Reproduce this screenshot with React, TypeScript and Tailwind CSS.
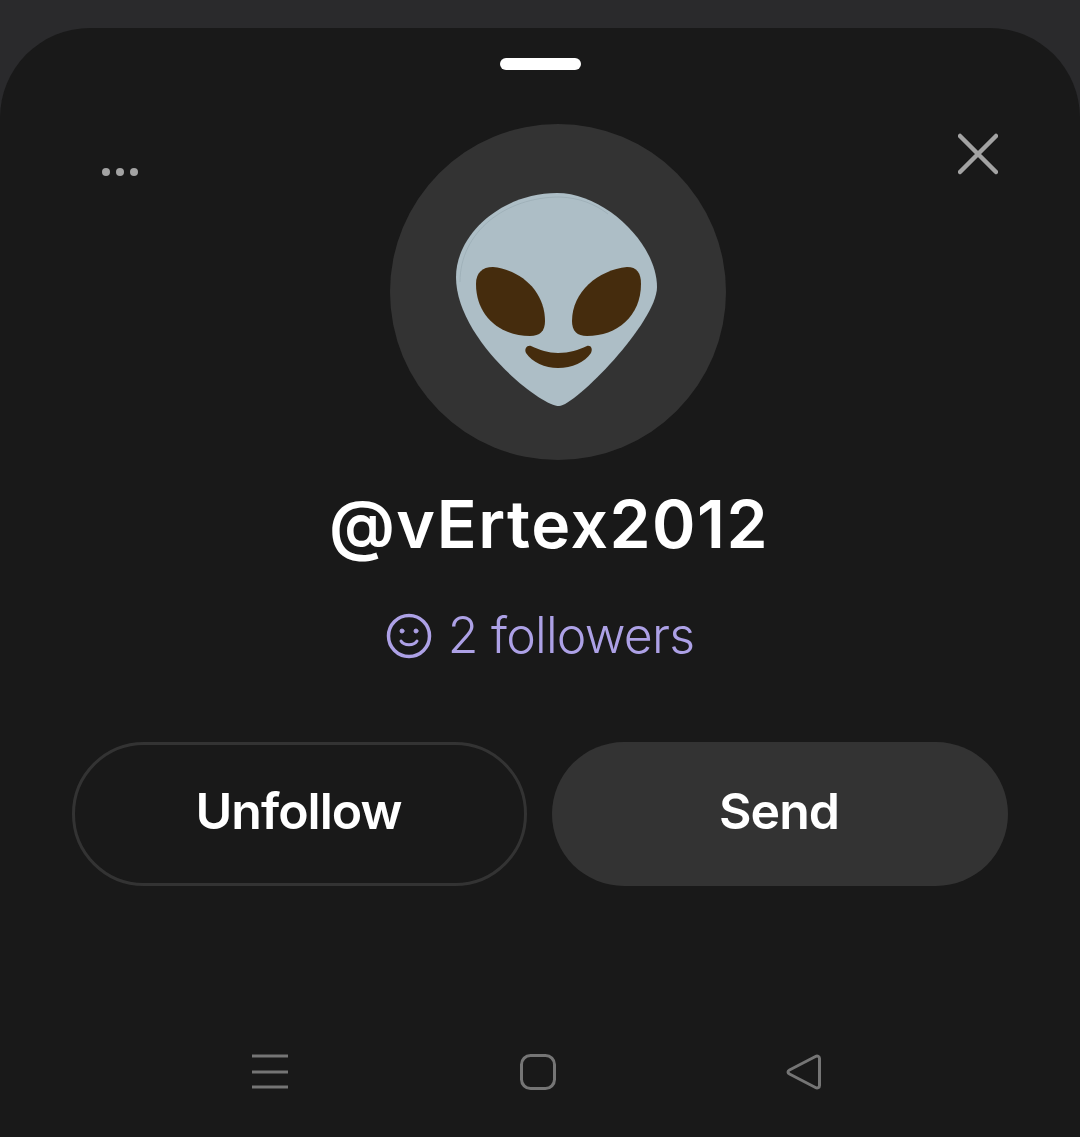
const FONT = "font-['Inter',sans-serif]";

function AlienEmoji() {
  return (
    <svg width="336" height="336" viewBox="0 0 336 336" aria-hidden>
      <path
        d="M167 69C215 69 267 120 267 163C267 198 185 282 169 282C150 282 66 215 66 153C66 110 112 69 167 69Z"
        fill="#adbec6"
      />
      <path d="M70 158C70 108 115 73 170 73C190 74 205 80 218 90" fill="none" stroke="#93a5ad" strokeWidth="0.5" />
      <path
        d="M103 143C132 146 155 168 155 197C155 207 150 212 140 212C110 212 86 192 86 160C86 149 92 143 103 143Z"
        fill="#452c0d"
      />
      <path
        d="M237 143C208 146 182 168 182 197C182 207 187 212 197 212C227 212 251 192 251 160C251 149 247 143 237 143Z"
        fill="#452c0d"
      />
      <path
        d="M141 222C150 226 158 229 168 229C180 229 188 226 197 222C201 221 203 225 201 229C195 238 182 244 168 244C155 244 142 238 136 229C134 225 137 221 141 222Z"
        fill="#452c0d"
      />
    </svg>
  );
}

function NavBar() {
  return (
    <div className="mt-[168px] flex h-[36px] items-center">
      <svg className="ml-[252px]" width="36" height="36" viewBox="0 0 36 36" fill="none" stroke="#757575" strokeWidth="3" aria-hidden>
        <path d="M0 2h36M0 18h36M0 33h36" />
      </svg>
      <svg className="ml-[232px]" width="36" height="36" viewBox="0 0 36 36" fill="none" stroke="#757575" strokeWidth="3" aria-hidden>
        <rect x="1.500" y="1.500" width="33" height="33" rx="9" />
      </svg>
      <svg className="ml-[230px]" width="36" height="36" viewBox="0 0 36 36" fill="none" stroke="#757575" strokeWidth="3" strokeLinejoin="round" aria-hidden>
        <path d="M29.500 2.500C31.500 1.500 33.500 2.500 33.500 4.500V31.500C33.500 33.500 31.500 34.500 29.500 33.500L3.500 20C1.500 19 1.500 17 3.500 16Z" />
      </svg>
    </div>
  );
}

export default function App() {
  return (
    <div className={`${FONT} h-[1137px] w-[1080px] overflow-hidden bg-[#2a2a2c] pt-[28px]`}>
      <div className="h-[1109px] rounded-t-[90px] bg-[#191919]">
        <div className="flex justify-center pt-[30px]">
          <div className="h-[12px] w-[81px] rounded-full bg-white" />
        </div>

        <div className="mt-[54px] flex items-start">
          <div className="ml-[102px] mt-[44px] flex gap-[6px]">
            <span className="h-[8px] w-[8px] rounded-full bg-[#a3a3a3]" />
            <span className="h-[8px] w-[8px] rounded-full bg-[#a3a3a3]" />
            <span className="h-[8px] w-[8px] rounded-full bg-[#a3a3a3]" />
          </div>
          <div className="ml-[252px] h-[336px] w-[336px] rounded-full bg-[#333333]">
            <AlienEmoji />
          </div>
          <svg className="ml-[232px] mt-[9px]" width="40" height="42" viewBox="0 0 40 42" fill="none" stroke="#a3a3a3" strokeWidth="4.500" strokeLinecap="round" aria-hidden>
            <path d="M2 3L38 39M38 3L2 39" />
          </svg>
        </div>

        <div className="mt-[28px] pl-[18px] text-center text-[66px] font-semibold leading-[72px] tracking-[1.500px] text-white">
          @vErtex2012
        </div>

        <div className="mt-[47px] flex items-center justify-center gap-[16px] text-[#ada1e6]">
          <svg className="mt-[2px]" width="46" height="46" viewBox="0 0 46 46" fill="none" stroke="currentColor" strokeWidth="3.500" strokeLinecap="round" aria-hidden>
            <circle cx="23" cy="23" r="20.500" />
            <path d="M15 28C18 33 28 33 31 28" strokeWidth="3" />
            <circle cx="16" cy="18" r="2" fill="currentColor" strokeWidth="1" />
            <circle cx="30" cy="18" r="2" fill="currentColor" strokeWidth="1" />
          </svg>
          <span className="text-[50px] font-light leading-[56px] tracking-[-0.800px]">2 followers</span>
        </div>

        <div className="mt-[79px] flex gap-[25px] pl-[72px] pr-[72px]">
          <button className="flex h-[144px] w-[455px] items-center justify-center rounded-full border-[3px] border-[#333333] pb-[5px] pr-[2px] text-[50px] font-semibold tracking-[-1px] text-white">
            Unfollow
          </button>
          <button className="flex h-[144px] w-[456px] items-center justify-center rounded-full bg-[#333333] pb-[5px] pr-[2px] text-[50px] font-semibold tracking-[-1px] text-white">
            Send
          </button>
        </div>

        <NavBar />
      </div>
    </div>
  );
}
